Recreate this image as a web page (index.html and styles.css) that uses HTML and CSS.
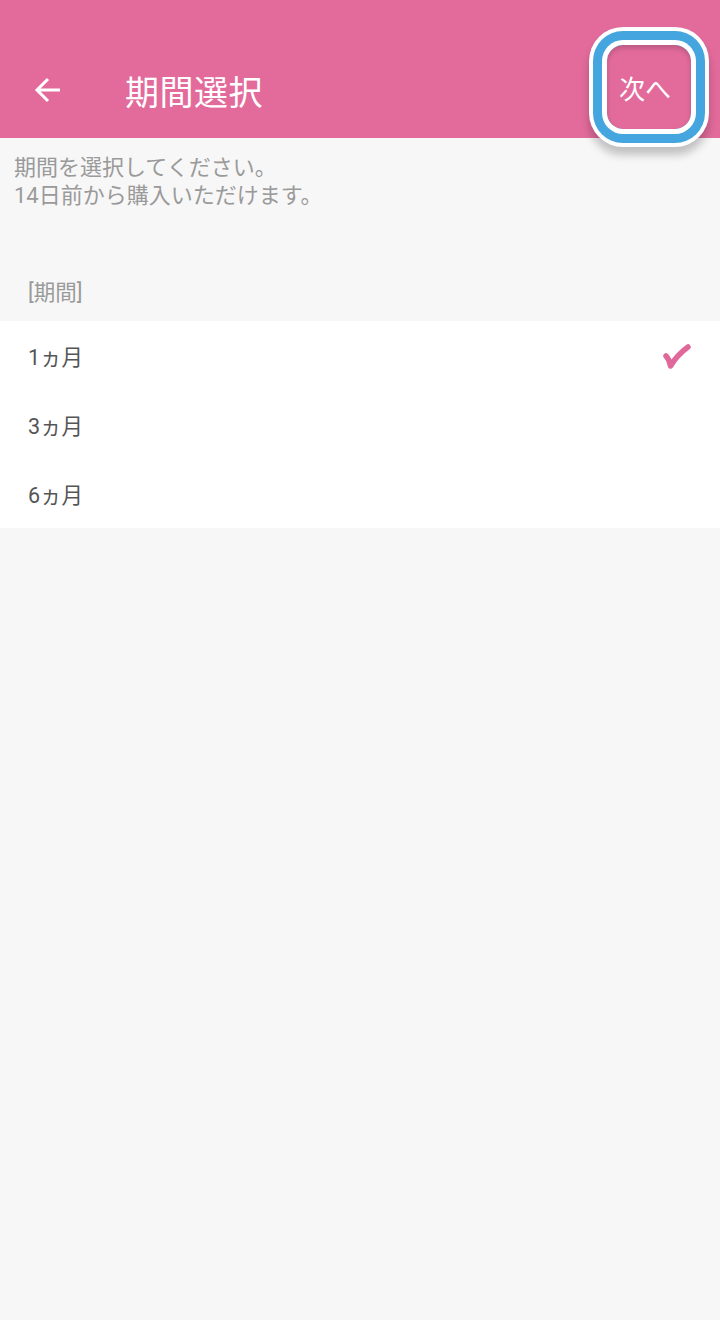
FILE: index.html
```html
<!DOCTYPE html>
<html lang="ja">
<head>
    <meta charset="UTF-8">
    <meta name="viewport" content="width=device-width, initial-scale=1.0">
    <title>期間選択</title>
    <link rel="stylesheet" href="styles.css">
</head>
<body>

    <!-- App bar -->
    <header class="app-bar">
        <div class="toolbar">
            <button class="back-btn" aria-label="戻る">
                <svg width="28" height="28" viewBox="0 0 28 28">
                    <path d="M26 14 H3 M14 3 L3 14 L14 25" fill="none" stroke="#fff" stroke-width="3"/>
                </svg>
            </button>
            <h1 class="title">期間選択</h1>
            <div class="next-btn">次へ</div>
        </div>
    </header>

    <p class="intro">期間を選択してください。<br>14日前から購入いただけます。</p>

    <div class="section-label">[期間]</div>

    <!-- Period list -->
    <ul class="period-list">
        <li class="period-item selected">
            <span>1ヵ月</span>
            <svg class="check" width="28" height="26" viewBox="0 0 28 26">
                <path d="M3 12 Q6 15 7.5 22 Q14 11 25 3" fill="none" stroke="#e0689a" stroke-width="5.5" stroke-linecap="round" stroke-linejoin="round"/>
            </svg>
        </li>
        <li class="period-item"><span>3ヵ月</span></li>
        <li class="period-item"><span>6ヵ月</span></li>
    </ul>

</body>
</html>
```

FILE: styles.css
```css
body {
    margin: 0;
    padding: 0;
    background-color: #f7f7f7;
    font-family: Roboto, "Noto Sans CJK JP", sans-serif;
    min-height: 1320px;
}

.app-bar {
    background-color: #e26b9b;
    height: 138px;
    padding-top: 42px;
    box-sizing: border-box;
}

.toolbar {
    display: flex;
    align-items: center;
    height: 96px;
}

.back-btn {
    background: none;
    border: none;
    padding: 0;
    margin-left: 34px;
    width: 28px;
    height: 28px;
    display: flex;
}

.title {
    margin: 0 0 0 63px;
    color: #fff;
    font-size: 34px;
    font-weight: 400;
    letter-spacing: 0.5px;
}

/* highlighted "next" action */
.next-btn {
    margin-left: auto;
    margin-right: 29px;
    margin-bottom: 6px;
    width: 84px;
    height: 84px;
    border-radius: 16px;
    box-sizing: border-box;
    padding-right: 8px;
    display: flex;
    align-items: center;
    justify-content: center;
    color: #fff;
    font-size: 26px;
    box-shadow:
        inset 0 3px 5px rgba(0, 0, 0, 0.18),
        0 0 0 5px #fff,
        0 0 0 14px #45a5de,
        0 0 0 18px #fff,
        0 8px 8px 18px rgba(0, 0, 0, 0.22);
}

.intro {
    margin: 0;
    padding: 16px 14px 0;
    color: #9a9a9a;
    font-size: 22px;
    line-height: 28px;
}

.section-label {
    margin-top: 69px;
    padding: 0 28px 14px;
    color: #9a9a9a;
    font-size: 21.5px;
    line-height: 28px;
}

.period-list {
    list-style: none;
    margin: 0;
    padding: 0;
    background-color: #fff;
}

.period-item {
    display: flex;
    align-items: center;
    justify-content: space-between;
    height: 69px;
    padding: 0 29px 0 28px;
    color: #555;
    font-size: 21.5px;
}

.check {
    margin-top: 2px;
}
```
